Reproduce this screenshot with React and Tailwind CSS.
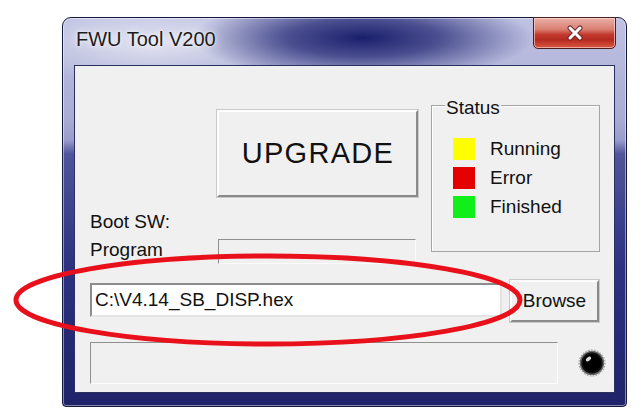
const sunken =
  "border border-t-[#8f8f8f] border-l-[#8f8f8f] border-b-[#fbfbfb] border-r-[#fbfbfb]";
const raised =
  "border-2 border-t-[#fdfdfd] border-l-[#fdfdfd] border-b-[#8a8a8a] border-r-[#8a8a8a] bg-[#f0f0f0] shadow-[0_0_0_1px_#c9c9c9]";

const CloseGlyph = () => (
  <svg width="18" height="16" viewBox="0 0 18 16">
    <path d="M4 3 L14 13 M14 3 L4 13" stroke="#6e2a26" strokeWidth="5" strokeLinecap="round" />
    <path d="M4 3 L14 13 M14 3 L4 13" stroke="#ffffff" strokeWidth="3" strokeLinecap="round" />
  </svg>
);

const Led = () => (
  <svg width="28" height="28" viewBox="0 0 28 28">
    <circle cx="14" cy="14" r="13" fill="none" stroke="#8a8a8a" strokeWidth="1" strokeDasharray="1.5 1.5" />
    <circle cx="14" cy="14" r="11.5" fill="#111" stroke="#6a6a6a" strokeWidth="1.5" />
    <circle cx="14" cy="14" r="9" fill="#000" />
    <ellipse cx="10.5" cy="10" rx="3" ry="1.8" fill="#d8d8d8" transform="rotate(-35 10.5 10)" />
  </svg>
);

const StatusRow = ({ color, label }) => (
  <div className="flex items-center gap-[15px] h-[22px]">
    <div className={`w-[22px] h-[22px] ${color}`} />
    <span className="text-[19px] leading-[22px] text-[#111]">{label}</span>
  </div>
);

export default function App() {
  return (
    <div className="relative w-[642px] h-[420px] bg-white overflow-hidden font-['Liberation_Sans',Arial,sans-serif]">
      {/* Window frame */}
      <div className="ml-[62px] mt-[17px] w-[565px] h-[390px] rounded-t-[9px] rounded-b-[4px] border border-[#15183f] flex flex-col shadow-[inset_0_0_0_1px_rgba(255,255,255,0.45)] bg-[radial-gradient(ellipse_170px_42px_at_300px_20px,#1a1f6c_0%,rgba(38,43,118,0.75)_45%,rgba(60,65,140,0)_100%),radial-gradient(ellipse_140px_40px_at_90px_26px,rgba(255,255,255,0.55),rgba(255,255,255,0)_100%),linear-gradient(to_bottom,#bfc2e2_0px,#a9acd3_100px,#9a9dcb_122px,#50559a_136px,#2d3180_250px,#1f2369_390px)]">
        {/* Title bar */}
        <div className="h-[47px] flex items-start">
          <span className="pl-[13px] pt-[9px] text-[20px] leading-[24px] text-[#1c1c1c] [text-shadow:0_0_8px_rgba(255,255,255,0.95),0_0_3px_rgba(255,255,255,0.8)]">
            FWU Tool V200
          </span>
          <div className="ml-auto mr-[10px] -mt-px w-[83px] h-[32px] rounded-b-[5px] border border-[#4e1f1f] shadow-[inset_0_0_0_1px_rgba(255,225,220,0.6)] bg-[linear-gradient(to_bottom,#eab0a8_0%,#d97f72_38%,#c23a2e_55%,#b52a20_72%,#d9573f_100%)] flex items-center justify-center">
            <CloseGlyph />
          </div>
        </div>

        {/* Client area */}
        <div className="mx-[11px] h-[328px] border border-[#2c2f62] bg-[#f0f0f0] flex flex-col">
          <div className="flex pl-[15px]">
            <div className="w-[127px] pt-[142px] text-[19px] leading-[28px] text-[#111]">
              <div>Boot SW:</div>
              <div>Program</div>
            </div>
            <div className="w-[201px] pt-[44px] flex flex-col">
              <div className={`h-[87px] flex items-center justify-center ${raised}`}>
                <span className="text-[29px] leading-none tracking-[1.3px] text-[#111] pl-[1px]">
                  UPGRADE
                </span>
              </div>
              <div className={`mt-[42px] ml-px w-[198px] h-[25px] ${sunken}`} />
            </div>
            <div className="ml-[13px] pt-[39px]">
              <div className="relative w-[169px] h-[147px] border border-[#a4a4a4] shadow-[inset_1px_1px_0_#fff] pt-[32px] pl-[21px] flex flex-col gap-[7px]">
                <span className="absolute -top-[9px] left-[13px] px-px bg-[#f0f0f0] text-[19px] leading-[22px] text-[#111]">
                  Status
                </span>
                <StatusRow color="bg-[#ffff00]" label="Running" />
                <StatusRow color="bg-[#e40000]" label="Error" />
                <StatusRow color="bg-[#11ef1b]" label="Finished" />
              </div>
            </div>
          </div>

          <div className="mt-[16px] pl-[15px] flex items-start">
            <div className="mt-[3px] w-[412px] h-[34px] bg-white border-2 border-t-[#8c8c8c] border-l-[#8c8c8c] border-b-[#e4e4e4] border-r-[#e4e4e4] flex items-center pl-[3px]">
              <span className="text-[19px] leading-[22px] text-[#111]">C:\V4.14_SB_DISP.hex</span>
            </div>
            <div className={`ml-[8px] w-[89px] h-[42px] flex items-center justify-center ${raised}`}>
              <span className="text-[19px] leading-[22px] text-[#111]">Browse</span>
            </div>
          </div>

          <div className="mt-[20px] pl-[15px] flex items-center">
            <div className={`w-[468px] h-[42px] ${sunken}`} />
            <div className="ml-[20px]">
              <Led />
            </div>
          </div>
        </div>
      </div>

      {/* Red highlight ellipse */}
      <svg className="absolute inset-0 pointer-events-none" width="642" height="420" viewBox="0 0 642 420">
        <ellipse cx="268" cy="300" rx="252" ry="44" fill="none" stroke="#e8101a" strokeWidth="5" />
      </svg>
    </div>
  );
}
